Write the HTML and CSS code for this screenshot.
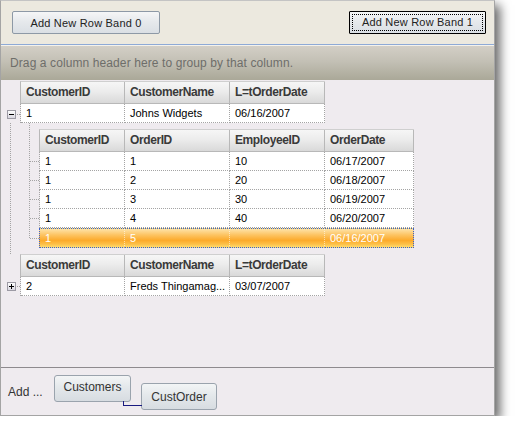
FILE: index.html
```html
<!DOCTYPE html>
<html>
<head>
<meta charset="utf-8">
<link rel="stylesheet" href="styles.css">
</head>
<body>
<div class="window">
  <div class="toolbar">
    <button class="btn btn0">Add New Row Band 0</button>
    <button class="btn btn1"><span class="focus">Add New Row Band 1</span></button>
  </div>
  <div class="groupby">Drag a column header here to group by that column.</div>
  <div class="grid">
    <div class="rec">
      <div class="hdr b0"><div class="hc w1">CustomerID</div><div class="hc w2">CustomerName</div><div class="hc w3">L=tOrderDate</div></div>
      <div class="line">
        <svg class="exp" width="13" height="9" viewBox="0 0 13 9"><defs><linearGradient id="ga" x1="0" y1="0" x2="0" y2="1"><stop offset="0" stop-color="#ffffff"/><stop offset="1" stop-color="#d6d4de"/></linearGradient></defs><rect x="0.5" y="0.5" width="8" height="8" fill="url(#ga)" stroke="#9c9aa4"/><path d="M2 4.5h5" stroke="#000"/><rect x="10" y="4" width="1" height="1" fill="#a0a0a0"/><rect x="12" y="4" width="1" height="1" fill="#a0a0a0"/></svg>
        <div class="drow b0"><div class="dc w1">1</div><div class="dc w2">Johns Widgets</div><div class="dc w3">06/16/2007</div></div>
      </div>
      <div class="children">
        <div class="childband">
          <div class="hdr b1"><div class="hc k1">CustomerID</div><div class="hc k2">OrderID</div><div class="hc k3">EmployeeID</div><div class="hc k4">OrderDate</div></div>
          <div class="drow b1 stub"><div class="dc k1">1</div><div class="dc k2">1</div><div class="dc k3">10</div><div class="dc k4">06/17/2007</div></div>
          <div class="drow b1 stub"><div class="dc k1">1</div><div class="dc k2">2</div><div class="dc k3">20</div><div class="dc k4">06/18/2007</div></div>
          <div class="drow b1 stub"><div class="dc k1">1</div><div class="dc k2">3</div><div class="dc k3">30</div><div class="dc k4">06/19/2007</div></div>
          <div class="drow b1 stub"><div class="dc k1">1</div><div class="dc k2">4</div><div class="dc k3">40</div><div class="dc k4">06/20/2007</div></div>
          <div class="drow b1 stub sel"><div class="dc k1">1</div><div class="dc k2">5</div><div class="dc k3"></div><div class="dc k4">06/16/2007</div></div>
        </div>
      </div>
    </div>
    <div class="rec">
      <div class="hdr b0"><div class="hc w1">CustomerID</div><div class="hc w2">CustomerName</div><div class="hc w3">L=tOrderDate</div></div>
      <div class="line">
        <svg class="exp" width="13" height="9" viewBox="0 0 13 9"><defs><linearGradient id="gb" x1="0" y1="0" x2="0" y2="1"><stop offset="0" stop-color="#ffffff"/><stop offset="1" stop-color="#d6d4de"/></linearGradient></defs><rect x="0.5" y="0.5" width="8" height="8" fill="url(#gb)" stroke="#9c9aa4"/><path d="M2 4.5h5M4.5 2v5" stroke="#000"/><rect x="10" y="4" width="1" height="1" fill="#a0a0a0"/><rect x="12" y="4" width="1" height="1" fill="#a0a0a0"/></svg>
        <div class="drow b0"><div class="dc w1">2</div><div class="dc w2">Freds Thingamag...</div><div class="dc w3">03/07/2007</div></div>
      </div>
    </div>
  </div>
  <div class="designer">
    <span class="add">Add ...</span>
    <div class="chip chip1">Customers</div>
    <div class="chip chip2">CustOrder</div>
  </div>
</div>
</body>
</html>
```
FILE: styles.css
```css
html, body {
  margin: 0;
  padding: 0;
  background: #ffffff;
}
body {
  font-family: "Liberation Sans", Arial, sans-serif;
  font-size: 11px;
  color: #000;
}
.window {
  width: 495px;
  height: 416px;
  box-sizing: border-box;
  border: 1px solid #a4a4a4;
  border-top-color: #c4c4c4;
  background: #efebef;
  box-shadow: 5px 5px 10px rgba(0, 0, 0, 0.6);
  display: flex;
  flex-direction: column;
}
.toolbar {
  height: 44px;
  box-sizing: border-box;
  padding: 10px 8px 0 11px;
  display: flex;
  align-items: flex-start;
  background: #ece9df;
  border-bottom: 1px solid #8eaad6;
  flex: none;
}
.btn {
  height: 23px;
  box-sizing: border-box;
  margin: 0;
  font-family: "Liberation Sans", Arial, sans-serif;
  font-size: 11px;
  letter-spacing: 0.2px;
  color: #222;
  border: 1px solid #8d99a6;
  border-radius: 2px;
  background: linear-gradient(#f5f6f7 0%, #e6e9ec 45%, #dadfe4 100%);
  padding: 0;
  text-align: center;
}
.btn0 {
  width: 148px;
}
.btn1 {
  width: 137px;
  margin-left: auto;
  border: 1px solid #000;
  border-radius: 1px;
  padding: 2px;
}
.btn1 .focus {
  display: block;
  height: 100%;
  box-sizing: border-box;
  border: 1px dotted #000;
  line-height: 15px;
}
.groupby {
  height: 35px;
  box-sizing: border-box;
  border-top: 1px solid #f4f2ec;
  background: linear-gradient(#d3cfc6 0%, #c3c0b5 45%, #aaa898 100%);
  color: #6e6e6a;
  font-size: 12px;
  letter-spacing: 0.1px;
  line-height: 34px;
  padding-left: 9px;
  flex: none;
}
.grid {
  height: 287px;
  box-sizing: border-box;
  padding-top: 1px;
  flex: none;
}
.hdr {
  display: flex;
  margin-left: 19px;
  border-left: 1px solid #b8b8b8;
  border-top: 1px solid #cfcfcf;
  width: max-content;
}
.hc {
  height: 22px;
  box-sizing: border-box;
  border-right: 1px solid #b8b8b8;
  border-bottom: 1px solid #b8b8b8;
  background: linear-gradient(#f6f6f6 0%, #ececec 45%, #d9d9d9 100%);
  padding-left: 5px;
  line-height: 21px;
  font-size: 12px;
  letter-spacing: -0.4px;
  font-weight: bold;
  color: #3a3a3a;
  white-space: nowrap;
  overflow: hidden;
}
.line {
  display: flex;
  align-items: flex-start;
}
.exp {
  display: block;
  margin: 6px 0 0 6px;
  flex: none;
}
.rec:nth-child(2) .exp {
  margin-top: 5px;
}
.drow {
  display: flex;
  border-left: 1px dotted #a4a4a4;
  width: max-content;
}
.dc {
  height: 19px;
  box-sizing: border-box;
  border-right: 1px dotted #a4a4a4;
  border-bottom: 1px dotted #a4a4a4;
  background: #fff;
  padding-left: 5px;
  line-height: 18px;
  white-space: nowrap;
  overflow: hidden;
}
.w1 { width: 104px; }
.w2 { width: 105px; }
.w3 { width: 95px; }
.k1 { width: 85px; }
.k2 { width: 105px; }
.k3 { width: 95px; }
.k4 { width: 89px; }
.children {
  margin-left: 9px;
  border-left: 1px dotted #a4a4a4;
  padding: 0 0 6px 18px;
}
.childband {
  position: relative;
  padding: 6px 0 0 10px;
}
.childband::before {
  content: "";
  position: absolute;
  left: 0;
  top: 0;
  bottom: 10px;
  border-left: 1px dotted #a4a4a4;
}
.childband .hdr {
  margin-left: 0;
}
.stub {
  position: relative;
}
.stub::before {
  content: "";
  position: absolute;
  left: -10px;
  width: 9px;
  top: 9px;
  border-top: 1px dotted #a4a4a4;
}
.sel {
  border-top: 1px dotted #3a5fcd;
  border-left-color: #3a5fcd;
  background: linear-gradient(#fee3a8 0%, #fdc565 30%, #fcaa2a 60%, #fdc048 80%, #fee27a 100%);
}
.sel .dc {
  background: transparent;
  color: #fff;
  border-bottom-color: #3a5fcd;
  border-right-color: rgba(255, 255, 255, 0.55);
}
.sel .k4 {
  border-right-color: #3a5fcd;
}
.designer {
  flex: 1;
  border-top: 1px solid #8e8a8e;
  display: flex;
  align-items: flex-start;
  padding: 7px 0 0 7px;
}
.add {
  width: 46px;
  margin-top: 10px;
  font-size: 12px;
  line-height: 14px;
  color: #333;
  flex: none;
}
.chip {
  box-sizing: border-box;
  height: 27px;
  border: 1px solid #9aa3ad;
  border-radius: 3px;
  background: linear-gradient(#f3f5f6 0%, #e4e8eb 45%, #d7dce1 100%);
  font-size: 12px;
  color: #333;
  text-align: center;
  line-height: 23px;
  flex: none;
}
.chip1 {
  width: 77px;
}
.chip2 {
  width: 76px;
  margin: 8px 0 0 10px;
  line-height: 27px;
  position: relative;
}
.chip2::before {
  content: "";
  position: absolute;
  left: -19px;
  top: 17px;
  width: 18px;
  height: 4px;
  border-left: 1px solid #1a1a80;
  border-bottom: 1px solid #1a1a80;
}
```
